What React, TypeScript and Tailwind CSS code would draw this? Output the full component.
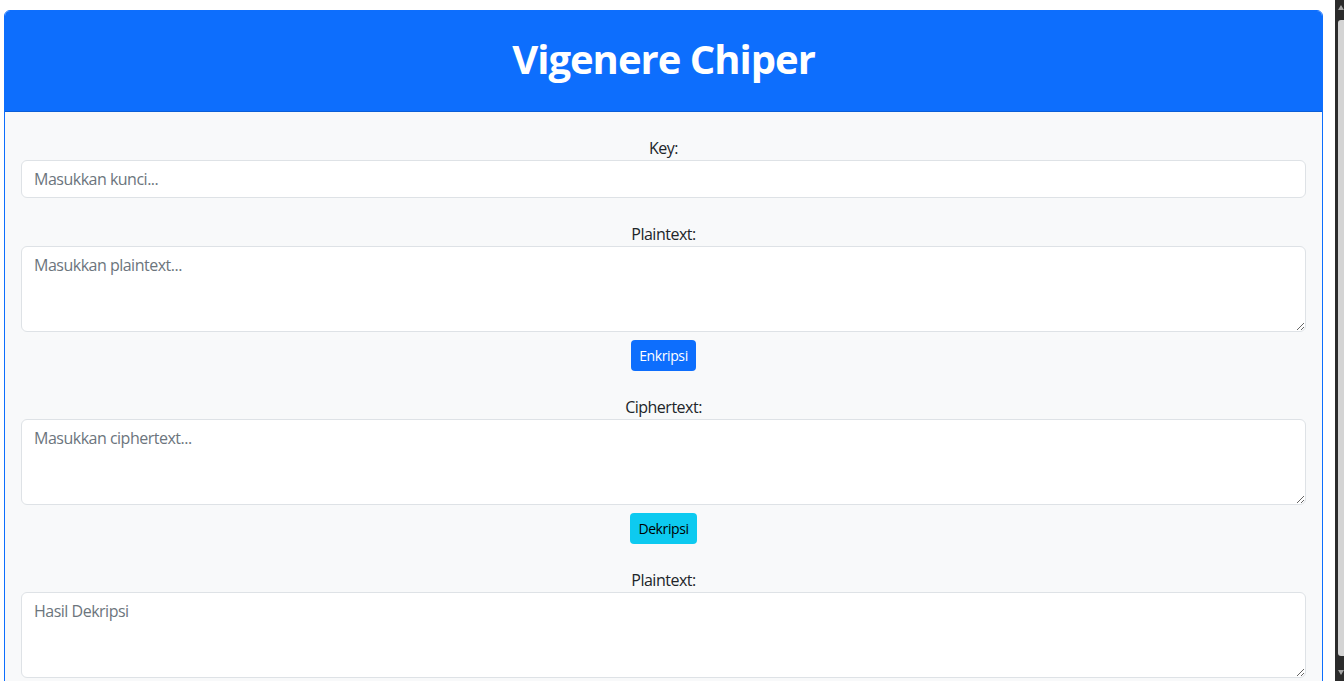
const font = { fontFamily: '"Open Sans", "Noto Sans", sans-serif' };

const Field = ({ label, placeholder }: { label: string; placeholder: string }) => (
  <div className="flex flex-col">
    <label className="text-center text-[16px] leading-[24px] tracking-[-0.5px] text-[#212529]">{label}</label>
    <textarea
      rows={3}
      placeholder={placeholder}
      className="h-[86px] w-full resize-y rounded-[6px] border border-[#dee2e6] bg-white px-3 py-[6px] text-[16px] leading-[24px] tracking-[-0.5px] text-[#212529] placeholder:text-[#6c757d] focus:outline-none"
    />
  </div>
);

const App = () => {
  return (
    <div className="flex h-[681px] w-full overflow-hidden bg-white" style={font}>
      <div className="flex-1 pl-[4px] pr-[12px] pt-[10px]">
        <div className="rounded-t-[6px] border border-[#0d6efd] bg-[#f8f9fa]">
          <div className="flex h-[101px] items-center justify-center rounded-t-[5px] border-b border-[#0b5ed7] bg-[#0d6efd] pb-[4px]">
            <h1 className="text-[40px] font-bold leading-[48px] tracking-[-1px] text-white">Vigenere Chiper</h1>
          </div>
          <div className="flex flex-col px-4 pt-6">
            <div className="flex flex-col">
              <label className="text-center text-[16px] leading-[24px] tracking-[-0.5px] text-[#212529]">Key:</label>
              <input
                type="text"
                placeholder="Masukkan kunci..."
                className="h-[38px] w-full rounded-[6px] border border-[#dee2e6] bg-white px-3 text-[16px] tracking-[-0.5px] text-[#212529] placeholder:text-[#6c757d] focus:outline-none"
              />
            </div>
            <div className="mt-6">
              <Field label="Plaintext:" placeholder="Masukkan plaintext..." />
            </div>
            <div className="mt-2 flex justify-center">
              <button className="h-[31px] rounded-[4px] bg-[#0d6efd] px-[8px] text-[14px] tracking-[-0.4px] text-white">Enkripsi</button>
            </div>
            <div className="mt-6">
              <Field label="Ciphertext:" placeholder="Masukkan ciphertext..." />
            </div>
            <div className="mt-2 flex justify-center">
              <button className="h-[31px] rounded-[4px] bg-[#0dcaf0] px-[8px] text-[14px] tracking-[-0.4px] text-black">Dekripsi</button>
            </div>
            <div className="mt-6">
              <Field label="Plaintext:" placeholder="Hasil Dekripsi" />
            </div>
            <div className="h-10" />
          </div>
        </div>
      </div>
      <div className="flex w-[9px] flex-col items-end bg-[#2b2b2b] pt-[5px] pb-[6px]">
        <div className="h-0 w-0 border-x-[3px] border-b-[5px] border-x-transparent border-b-[#a3a3a3]" />
        <div className="mt-[10px] mb-[14px] w-[6px] flex-1 rounded-l-[3px] bg-[#d4d4d4]" />
        <div className="h-0 w-0 border-x-[3px] border-t-[5px] border-x-transparent border-t-[#a3a3a3]" />
      </div>
    </div>
  );
};

export default App;
